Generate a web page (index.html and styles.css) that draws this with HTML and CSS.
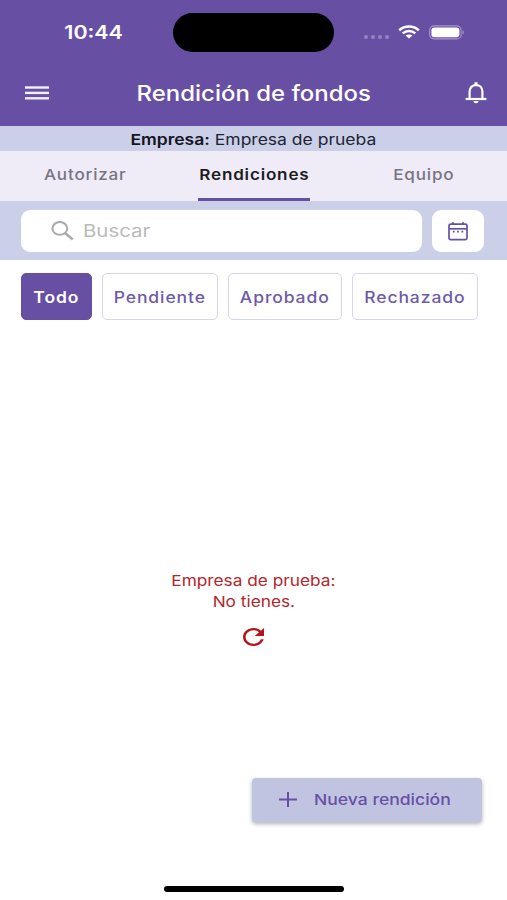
FILE: index.html
```html
<!DOCTYPE html>
<html lang="es">
<head>
<meta charset="UTF-8">
<meta name="viewport" content="width=device-width, initial-scale=1.0">
<title>Rendición de fondos</title>
<link rel="stylesheet" href="styles.css">
</head>
<body>

<header class="header">
    <div class="status-bar">
        <div class="clock"><span class="wide">10:44</span></div>
        <div class="island"></div>
        <div class="status-icons">
            <div class="dots"><i></i><i></i><i></i><i></i></div>
            <svg class="wifi" width="22" height="14" viewBox="0 0 22 14" fill="none" stroke="#fff" stroke-width="2.5">
                <path d="M1.2 5.2C6.8 .2 15.2 .2 20.8 5.2"/>
                <path d="M4.7 8.4C8.4 5.2 13.6 5.2 17.3 8.4"/>
                <path d="M11 13.6L7.6 10.6C9.5 9 12.5 9 14.4 10.6Z" fill="#fff" stroke="none"/>
            </svg>
            <svg class="battery" width="36" height="15" viewBox="0 0 36 15">
                <rect x=".6" y=".9" width="31.6" height="13" rx="4.5" fill="none" stroke="#a795cf" stroke-width="1.1"/>
                <rect x="2.4" y="2.5" width="28" height="9.8" rx="3" fill="#fff"/>
                <path d="M33.6 5.2C35.4 6 35.4 8.8 33.6 9.6Z" fill="#a795cf"/>
            </svg>
        </div>
    </div>
    <div class="app-bar">
        <svg width="24" height="14" viewBox="0 0 24 14" fill="#f3effa">
            <rect y=".3" width="24" height="2.4"/>
            <rect y="5.7" width="24" height="2.4"/>
            <rect y="11.1" width="24" height="2.4"/>
        </svg>
        <h1 class="title"><span class="wide">Rendición de fondos</span></h1>
        <svg width="22" height="22" viewBox="0 0 22 22" fill="none" stroke="#fff" stroke-width="2.2">
            <path d="M4.6 17V9.6C4.6 5.7 7.2 3.1 11 3.1S17.4 5.7 17.4 9.6V17"/>
            <path d="M.6 17H21.4"/>
            <path d="M11 .2V3" stroke-width="3"/>
            <path d="M8.4 19H13.6C13.3 20.6 12.4 21.2 11 21.2S8.7 20.6 8.4 19Z" fill="#fff" stroke="none"/>
        </svg>
    </div>
</header>

<div class="company"><span class="wide"><b>Empresa:</b> Empresa de prueba</span></div>

<nav class="tabs">
    <a class="tab"><span class="wide">Autorizar</span></a>
    <a class="tab active"><span class="wide">Rendiciones</span></a>
    <a class="tab"><span class="wide">Equipo</span></a>
</nav>

<div class="search-row">
    <div class="search">
        <svg width="24" height="20" viewBox="0 0 24 20" fill="none" stroke="#a9abad" stroke-width="2.1">
            <ellipse cx="8.8" cy="7.4" rx="7.4" ry="6.4"/>
            <path d="M14.2 12.2L21.8 18.4" stroke-width="2.6"/>
        </svg>
        <span class="wide">Buscar</span>
    </div>
    <button class="date-button">
        <svg width="20" height="19" viewBox="0 0 20 19" fill="none" stroke="#6750a4" stroke-width="1.7">
            <rect x="1" y="2.2" width="18" height="15.4" rx="1.6"/>
            <path d="M1 6.8H19"/>
            <path d="M4.9 .2V3M15.1 .2V3" stroke-width="2"/>
            <path d="M4.8 9.6H6.6M9.1 9.6H10.9M13.4 9.6H15.2"/>
        </svg>
    </button>
</div>

<div class="filters">
    <button class="chip todo"><span class="wide">Todo</span></button>
    <button class="chip pendiente"><span class="wide">Pendiente</span></button>
    <button class="chip aprobado"><span class="wide">Aprobado</span></button>
    <button class="chip rechazado"><span class="wide">Rechazado</span></button>
</div>

<main class="empty">
    <p><span class="wide">Empresa de prueba:</span></p>
    <p><span class="wide">No tienes.</span></p>
    <svg width="21" height="18" viewBox="4 4 16 16" preserveAspectRatio="none" fill="#b3141b">
        <path d="M17.65 6.35C16.2 4.9 14.21 4 12 4c-4.42 0-7.99 3.58-7.99 8s3.57 8 7.99 8c3.73 0 6.84-2.55 7.73-6h-2.08c-.82 2.33-3.04 4-5.65 4-3.31 0-6-2.69-6-6s2.69-6 6-6c1.66 0 3.14.69 4.22 1.78L13 11h7V4l-2.35 2.35z"/>
    </svg>
</main>

<footer class="footer">
    <button class="new-button">
        <svg width="18" height="15" viewBox="0 0 18 15" stroke="#6750a4" stroke-width="2">
            <path d="M0 7.5H18M9 0V15"/>
        </svg>
        <span class="wide">Nueva rendición</span>
    </button>
    <div class="home-bar"></div>
</footer>

</body>
</html>
```

FILE: styles.css
```css
* {
    box-sizing: border-box;
}

body {
    margin: 0;
    height: 900px;
    display: flex;
    flex-direction: column;
    overflow: hidden;
    background-color: #fff;
    font-family: Inter, "Liberation Sans", sans-serif;
    font-size: 15px;
}

button {
    padding: 0;
    border: none;
    font: inherit;
}

svg {
    display: block;
    flex: none;
}

/* lettering is slightly extended everywhere */
.wide {
    display: inline-block;
    white-space: nowrap;
    transform: scaleX(1.15);
}

.header {
    height: 126px;
    background-color: #6750a4;
    color: #fff;
}

.status-bar {
    height: 64px;
    display: grid;
    grid-template-columns: 173px 161px 1fr;
    align-items: center;
}

.clock {
    padding-left: 14px;
    text-align: center;
    font-size: 18px;
    font-weight: 600;
}

.clock .wide {
    transform: scaleX(1.19);
}

.island {
    height: 39px;
    border-radius: 20px;
    background-color: #000;
}

.status-icons {
    display: flex;
    align-items: center;
    padding-left: 30px;
}

.dots {
    display: flex;
    gap: 3px;
    padding-top: 9px;
    margin-right: 9px;
}

.dots i {
    width: 4px;
    height: 4px;
    border-radius: 50%;
    background-color: #9482c2;
}

.battery {
    margin-left: 9px;
}

.app-bar {
    height: 58px;
    display: flex;
    align-items: center;
    justify-content: space-between;
    padding: 0 20px 0 25px;
}

.title {
    margin: 0;
    padding-right: 6px;
    font-size: 21px;
    font-weight: 500;
}

.title .wide {
    transform: scaleX(1.14);
}

.company {
    height: 25px;
    line-height: 27px;
    text-align: center;
    background-color: #cbcfe8;
    color: #202333;
}

.company .wide {
    transform: scaleX(1.167);
}

.company b {
    font-weight: 600;
    color: #14151f;
}

.tabs {
    height: 50px;
    display: grid;
    grid-template-columns: repeat(3, 1fr);
    justify-items: center;
    background-color: #efebf7;
}

.tab {
    height: 50px;
    line-height: 48px;
    font-weight: 500;
    letter-spacing: 0.7px;
    color: #787482;
}

.tab .wide {
    transform: translateX(1px) scaleX(1.14);
}

.active {
    width: 112px;
    text-align: center;
    font-weight: 600;
    color: #1c1b22;
    background: linear-gradient(#6750a4, #6750a4) bottom / 100% 3px no-repeat;
}

.search-row {
    height: 59px;
    display: flex;
    gap: 10px;
    padding: 9px 23px 8px 21px;
    background-color: #cbcfe8;
}

.search {
    flex: 1;
    display: flex;
    align-items: center;
    gap: 8px;
    padding-left: 30px;
    border-radius: 9px;
    background-color: #fff;
    color: #b9bbbc;
    font-size: 17px;
}

.search .wide {
    transform: scaleX(1.2);
    transform-origin: left;
}

.date-button {
    width: 52px;
    display: flex;
    align-items: center;
    justify-content: center;
    border-radius: 9px;
    background-color: #fff;
}

.filters {
    display: flex;
    gap: 10px;
    padding: 13px 21px 0;
}

.chip {
    height: 47px;
    padding-top: 2px;
    border: 1px solid #d6d5ea;
    border-radius: 5px;
    background-color: #fff;
    color: #6f5aa8;
    font-size: 15.5px;
    font-weight: 500;
    letter-spacing: 0.8px;
}

.chip .wide {
    transform: scaleX(1.13);
}

.todo {
    width: 71px;
    border-color: #6750a4;
    background-color: #6750a4;
    color: #fff;
    font-weight: 600;
}

.pendiente {
    width: 116px;
}

.aprobado {
    width: 114px;
}

.rechazado {
    width: 126px;
}

.empty {
    flex: 1;
    display: flex;
    flex-direction: column;
    align-items: center;
    padding-top: 250px;
    color: #b3262b;
}

.empty p {
    margin: 0;
    line-height: 21px;
}

.empty svg {
    margin-top: 16px;
}

.footer {
    height: 122px;
    display: flex;
    flex-direction: column;
    align-items: flex-end;
    justify-content: space-between;
    padding-bottom: 8px;
}

.new-button {
    width: 230px;
    height: 44px;
    margin-right: 25px;
    display: flex;
    align-items: center;
    gap: 17px;
    padding: 0 0 2px 27px;
    border-radius: 4px;
    background-color: #c1c4e1;
    box-shadow: 0 2px 4px rgba(0, 0, 0, 0.3);
    color: #6750a4;
    font-weight: 500;
}

.new-button .wide {
    transform: scaleX(1.17);
    transform-origin: left;
}

.home-bar {
    width: 180px;
    height: 6px;
    margin-right: 163px;
    border-radius: 3px;
    background-color: #000;
}
```
